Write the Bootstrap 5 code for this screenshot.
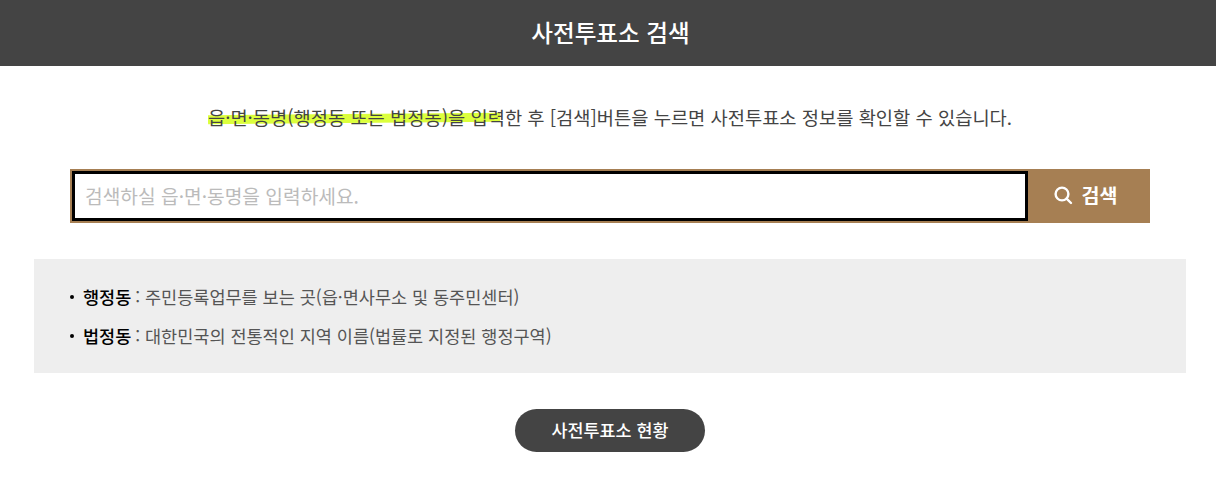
<!doctype html>
<html lang="ko">
<head>
<meta charset="utf-8">
<title>사전투표소 검색</title>
<link href="https://cdn.jsdelivr.net/npm/bootstrap@5.3.0/dist/css/bootstrap.min.css" rel="stylesheet">
<style>
body{font-family:"Noto Sans CJK KR","Noto Sans",sans-serif;color:#444;background:#fff}
.top-bar{height:66px;background:#444;color:#fff;font-size:23.6px;font-weight:500;padding:0 0 0 5px}
.intro{margin:0;padding:38px 0 0 4px;height:103px;font-size:18.72px;line-height:26px}
.hl{position:relative;z-index:0;display:inline-block}
.hl::before{content:"";position:absolute;z-index:-1;left:0;right:5px;top:10px;height:9px;background:#dcff3c;transform:rotate(-.5deg)}
.search-wrap{margin:0 66px 0 70px;height:54px;background:#a67f53;padding-left:2px}
.search-box{flex:1;margin:2px 0;height:50px;border:3px solid #000;background:#fff;border-radius:0;font-size:19.2px;padding:0 10px;color:#444;outline:0;font-family:inherit}
.search-box::placeholder{color:#bbb;opacity:1}
.search-btn{width:122px;background:transparent;border:0;color:#fff;font-size:19.5px;font-weight:700;font-family:inherit;gap:9px;padding:0 8px 3px 0}
.info-box{margin:36px 30px 0 34px;height:114px;background:#eee;padding:18px 30px 0;font-size:17.5px;list-style:none;color:#555}
.info-box li{height:39px;line-height:39px;display:flex;align-items:center;white-space:pre}
.info-box li::before{content:"";width:4px;height:4px;border-radius:50%;background:#000;margin:0 9px 0 6px}
.info-box b{color:#000;font-weight:500}
.info-txt{margin-left:-1px}
.status-btn{width:190px;height:43px;margin:36px 0 0 4px;background:#444;color:#fff;border-radius:22px;font-size:17.4px;font-weight:500;text-decoration:none}
</style>
</head>
<body>
<header class="top-bar d-flex align-items-center justify-content-center">사전투표소 검색</header>
<p class="intro text-center"><span class="hl">읍·면·동명(행정동 또는 법정동)을 입력</span>한 후 [검색]버튼을 누르면 사전투표소 정보를 확인할 수 있습니다.</p>
<form class="search-wrap d-flex">
  <input class="search-box" type="text" placeholder="검색하실 읍·면·동명을 입력하세요." aria-label="검색">
  <button class="search-btn d-flex align-items-center justify-content-center" type="button">
    <svg width="20" height="20" viewBox="0 0 20 20" fill="none" stroke="#fff" stroke-width="2.4" aria-hidden="true"><circle cx="9" cy="9" r="6.4"/><path d="M13.6 13.6 18 18" stroke-linecap="round"/></svg>
    검색
  </button>
</form>
<ul class="info-box">
  <li><b>행정동</b><span class="info-txt"> : 주민등록업무를 보는 곳(읍·면사무소 및 동주민센터)</span></li>
  <li><b>법정동</b><span class="info-txt"> : 대한민국의 전통적인 지역 이름(법률로 지정된 행정구역)</span></li>
</ul>
<div class="d-flex justify-content-center">
  <a class="status-btn d-flex align-items-center justify-content-center" href="#">사전투표소 현황</a>
</div>
<script src="https://cdn.jsdelivr.net/npm/bootstrap@5.3.0/dist/js/bootstrap.bundle.min.js"></script>
</body>
</html>
